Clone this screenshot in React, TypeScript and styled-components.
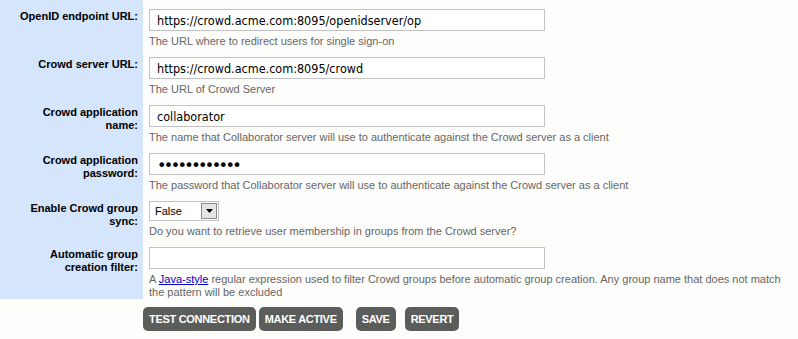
import React from 'react';
import styled, { createGlobalStyle } from 'styled-components';

const GlobalStyle = createGlobalStyle`
  html, body {
    margin: 0;
    padding: 0;
    background: #fdfdfb;
  }
  body {
    font-family: "Liberation Sans", Arial, sans-serif;
  }
`;

const Page = styled.div`
  width: 798px;
`;

const FormGrid = styled.div`
  display: grid;
  grid-template-columns: 143px 1fr;
`;

const LabelCell = styled.div`
  background: #d4e5fc;
  padding: 10px 5px 0 12px;
  text-align: right;
  font-size: 11px;
  line-height: 13px;
  font-weight: bold;
  color: #000;
`;

const ValueCell = styled.div`
  padding: 9px 10px 0 6px;
`;

const TextInput = styled.input`
  display: block;
  box-sizing: border-box;
  width: 396px;
  height: 22px;
  margin: 0;
  padding: 0 7px;
  border: 1px solid #c3c3c3;
  background: #fff;
  font-family: "DejaVu Sans Condensed", "DejaVu Sans", Verdana, sans-serif;
  font-stretch: semi-condensed;
  font-size: 12.5px;
  color: #000;
  outline: none;
`;

const PasswordInput = styled(TextInput)`
  font-family: "DejaVu Sans", Verdana, sans-serif;
  font-stretch: normal;
  font-size: 16px;
  letter-spacing: -2.6px;
  padding-top: 3px;
`;

const Help = styled.div`
  margin-top: 4px;
  font-size: 11px;
  line-height: 13px;
  color: #666;
`;

const HelpLink = styled.a`
  color: #0000cc;
  text-decoration: underline;
`;

const SelectBox = styled.div`
  box-sizing: border-box;
  width: 70px;
  height: 20px;
  display: flex;
  align-items: stretch;
  border: 1px solid #c3c3c3;
  background: #fff;
`;

const SelectValue = styled.span`
  flex: 1;
  display: flex;
  align-items: center;
  padding-left: 5px;
  font-size: 11px;
  color: #000;
`;

const SelectArrow = styled.span`
  box-sizing: border-box;
  width: 16px;
  margin: 1px;
  display: flex;
  align-items: center;
  justify-content: center;
  background: #e4e4e2;
  border: 1px solid #8a8a8a;
`;

const ButtonBar = styled.div`
  display: flex;
  padding: 8px 0 0 143px;
`;

const ActionButton = styled.button<{ $gap: number }>`
  height: 24px;
  margin: 0 ${(p) => p.$gap}px 0 0;
  padding: 0 6px;
  border: none;
  border-radius: 5px;
  background: #5b5d5b;
  color: #fff;
  font-family: "Liberation Sans", Arial, sans-serif;
  font-size: 11px;
  font-weight: bold;
  letter-spacing: -0.3px;
  text-transform: uppercase;
  cursor: pointer;
`;

type Field = {
  label: string;
  kind: 'text' | 'password' | 'select';
  value: string;
  help: React.ReactNode;
};

const fields: Field[] = [
  {
    label: 'OpenID endpoint URL:',
    kind: 'text',
    value: 'https://crowd.acme.com:8095/openidserver/op',
    help: 'The URL where to redirect users for single sign-on',
  },
  {
    label: 'Crowd server URL:',
    kind: 'text',
    value: 'https://crowd.acme.com:8095/crowd',
    help: 'The URL of Crowd Server',
  },
  {
    label: 'Crowd application name:',
    kind: 'text',
    value: 'collaborator',
    help: 'The name that Collaborator server will use to authenticate against the Crowd server as a client',
  },
  {
    label: 'Crowd application password:',
    kind: 'password',
    value: 'xxxxxxxxxxxx',
    help: 'The password that Collaborator server will use to authenticate against the Crowd server as a client',
  },
  {
    label: 'Enable Crowd group sync:',
    kind: 'select',
    value: 'False',
    help: 'Do you want to retrieve user membership in groups from the Crowd server?',
  },
  {
    label: 'Automatic group creation filter:',
    kind: 'text',
    value: '',
    help: (
      <>
        A <HelpLink href="#">Java-style</HelpLink> regular expression used to filter Crowd groups
        before automatic group creation. Any group name that does not match the pattern will be
        excluded
      </>
    ),
  },
];

const buttons = [
  { text: 'Test Connection', gap: 3 },
  { text: 'Make Active', gap: 13 },
  { text: 'Save', gap: 9 },
  { text: 'Revert', gap: 0 },
];

const App: React.FC = () => {
  return (
    <Page>
      <GlobalStyle />
      <FormGrid>
        {fields.map((f) => (
          <React.Fragment key={f.label}>
            <LabelCell>{f.label}</LabelCell>
            <ValueCell>
              {f.kind === 'select' ? (
                <SelectBox>
                  <SelectValue>{f.value}</SelectValue>
                  <SelectArrow>
                    <svg width="7" height="4" viewBox="0 0 7 4">
                      <path d="M0 0H7L3.5 4Z" fill="#000" />
                    </svg>
                  </SelectArrow>
                </SelectBox>
              ) : f.kind === 'password' ? (
                <PasswordInput type="password" defaultValue={f.value} />
              ) : (
                <TextInput type="text" defaultValue={f.value} />
              )}
              <Help>{f.help}</Help>
            </ValueCell>
          </React.Fragment>
        ))}
      </FormGrid>
      <ButtonBar>
        {buttons.map((b) => (
          <ActionButton key={b.text} $gap={b.gap}>
            {b.text}
          </ActionButton>
        ))}
      </ButtonBar>
    </Page>
  );
};

export default App;
